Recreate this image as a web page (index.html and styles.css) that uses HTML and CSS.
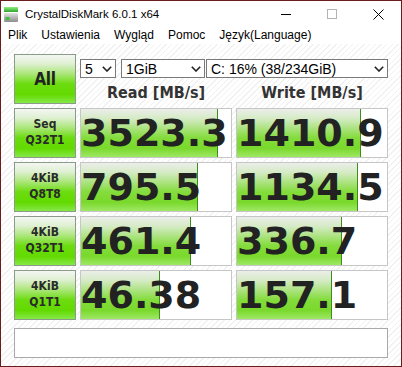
FILE: index.html
```html
<!DOCTYPE html>
<html>
<head>
<meta charset="utf-8">
<link rel="stylesheet" href="styles.css">
</head>
<body>
<div class="window">
  <div class="titlebar">
    <svg class="app-icon" width="14" height="15" viewBox="0 0 14 15">
      <defs>
        <linearGradient id="ig" x1="0" y1="0" x2="0" y2="1">
          <stop offset="0" stop-color="#8ef07a"/>
          <stop offset="1" stop-color="#2ea52e"/>
        </linearGradient>
        <linearGradient id="ib" x1="0" y1="0" x2="0" y2="1">
          <stop offset="0" stop-color="#e2e2e2"/>
          <stop offset="1" stop-color="#8c8c8c"/>
        </linearGradient>
      </defs>
      <rect x="0" y="0" width="14" height="5" fill="url(#ig)"/>
      <rect x="0" y="6" width="14" height="9" rx="1" fill="url(#ib)"/>
      <rect x="1.5" y="10" width="4" height="3" fill="#3ac43a"/>
    </svg>
    <span class="title">CrystalDiskMark 6.0.1 x64</span>
    <div class="caption">
      <span class="cap-btn"><svg width="10" height="10" viewBox="0 0 10 10"><line x1="0" y1="5.5" x2="10" y2="5.5" stroke="#000" stroke-width="1"/></svg></span>
      <span class="cap-btn"><svg width="10" height="10" viewBox="0 0 10 10"><rect x="0.5" y="0.5" width="9" height="9" fill="none" stroke="#b4b4b4" stroke-width="1"/></svg></span>
      <span class="cap-btn"><svg width="11" height="11" viewBox="0 0 11 11"><path d="M0.5 0.5 L10.5 10.5 M10.5 0.5 L0.5 10.5" stroke="#000" stroke-width="1" fill="none"/></svg></span>
    </div>
  </div>
  <div class="menubar">
    <span class="menu-item">Plik</span>
    <span class="menu-item">Ustawienia</span>
    <span class="menu-item">Wygląd</span>
    <span class="menu-item">Pomoc</span>
    <span class="menu-item">Język(Language)</span>
  </div>
  <div class="client">
    <div class="grid">
      <div class="btn btn-all">All</div>
      <div class="top-right">
        <div class="selects">
          <div class="select s-count"><span>5</span><span class="arrow"><svg width="10" height="6" viewBox="0 0 10 6"><polyline points="0.8,0.8 5,5 9.2,0.8" fill="none" stroke="#222" stroke-width="1.6"/></svg></span></div>
          <div class="select s-size"><span>1GiB</span><span class="arrow"><svg width="10" height="6" viewBox="0 0 10 6"><polyline points="0.8,0.8 5,5 9.2,0.8" fill="none" stroke="#222" stroke-width="1.6"/></svg></span></div>
          <div class="select s-drive"><span>C: 16% (38/234GiB)</span><span class="arrow"><svg width="10" height="6" viewBox="0 0 10 6"><polyline points="0.8,0.8 5,5 9.2,0.8" fill="none" stroke="#222" stroke-width="1.6"/></svg></span></div>
        </div>
        <div class="headers">
          <div>Read [MB/s]</div>
          <div>Write [MB/s]</div>
        </div>
      </div>

      <div class="btn"><span>Seq</span><span>Q32T1</span></div>
      <div class="cell"><div class="bar" style="width:91.3%"></div><span class="val">3523.3</span></div>
      <div class="cell"><div class="bar" style="width:82.7%"></div><span class="val">1410.9</span></div>

      <div class="btn"><span>4KiB</span><span>Q8T8</span></div>
      <div class="cell"><div class="bar" style="width:78%"></div><span class="val">795.5</span></div>
      <div class="cell"><div class="bar" style="width:80.7%"></div><span class="val">1134.5</span></div>

      <div class="btn"><span>4KiB</span><span>Q32T1</span></div>
      <div class="cell"><div class="bar" style="width:73.3%"></div><span class="val">461.4</span></div>
      <div class="cell"><div class="bar" style="width:70%"></div><span class="val">336.7</span></div>

      <div class="btn"><span>4KiB</span><span>Q1T1</span></div>
      <div class="cell"><div class="bar" style="width:52.7%"></div><span class="val">46.38</span></div>
      <div class="cell"><div class="bar" style="width:63.3%"></div><span class="val">157.1</span></div>
    </div>
    <div class="comment"></div>
  </div>
</div>
</body>
</html>
```
FILE: styles.css
```css
html, body {
  margin: 0;
  padding: 0;
  background: #fff;
}

.window {
  width: 402px;
  height: 367px;
  box-sizing: border-box;
  border: 1px solid #6b1d1d;
  display: flex;
  flex-direction: column;
  overflow: hidden;
  background: repeating-linear-gradient(135deg, #ffffff 0px, #ffffff 3px, #f1f1f1 3px, #f1f1f1 4px);
}

.titlebar {
  height: 26px;
  flex: none;
  background: #fff;
  display: flex;
  align-items: center;
  font-family: "Liberation Sans", Arial, sans-serif;
  font-size: 11.5px;
  color: #000;
}

.app-icon {
  margin-left: 3px;
  flex: none;
}

.title {
  margin-left: 7px;
}

.caption {
  margin-left: auto;
  display: flex;
  height: 100%;
}

.cap-btn {
  width: 46px;
  display: flex;
  align-items: center;
  justify-content: center;
}

.menubar {
  height: 17px;
  flex: none;
  background: #fff;
  display: flex;
  font-family: "Liberation Sans", Arial, sans-serif;
  font-size: 12px;
  line-height: 17px;
  color: #000;
}

.menu-item {
  padding: 0 7px;
}

.client {
  flex: 1;
  padding: 10px 13px 0 13px;
}

.grid {
  display: grid;
  grid-template-columns: 62px 152px 152px;
  grid-auto-rows: 50px;
  gap: 4px;
}

.btn {
  box-sizing: border-box;
  border: 1px solid #8b9b89;
  background: linear-gradient(to bottom, #f4f6f3 0%, #dff0d2 18%, #a9e676 40%, #6cdc10 60%, #62da00 82%, #86e848 100%);
  display: flex;
  flex-direction: column;
  align-items: center;
  justify-content: center;
  padding-bottom: 2px;
  font-family: "DejaVu Sans Condensed", "DejaVu Sans", sans-serif;
  font-stretch: condensed;
  font-weight: bold;
  font-size: 12px;
  line-height: 16px;
  color: #2a2a2a;
}

.btn-all {
  font-size: 17px;
  letter-spacing: -0.3px;
  padding-bottom: 0;
  color: #222;
}

.top-right {
  grid-column: 2 / 4;
  display: flex;
  flex-direction: column;
}

.selects {
  display: flex;
  margin-top: 5px;
  height: 19px;
}

.select {
  box-sizing: border-box;
  height: 19px;
  border: 1px solid #7a7a7a;
  background: #fff;
  display: flex;
  align-items: center;
  padding-left: 4px;
  font-family: "Liberation Sans", Arial, sans-serif;
  font-size: 14px;
  color: #000;
}

.select .arrow {
  margin-left: auto;
  width: 17px;
  display: flex;
  align-items: center;
  justify-content: center;
}

.s-count { width: 36px; }
.s-size { width: 84px; margin-left: 5px; }
.s-drive { width: 182px; margin-left: 1px; }

.headers {
  display: grid;
  grid-template-columns: 152px 152px;
  gap: 4px;
  margin-top: 6px;
  font-family: "DejaVu Sans Condensed", "DejaVu Sans", sans-serif;
  font-stretch: condensed;
  font-weight: bold;
  font-size: 16px;
  line-height: 18px;
  text-align: center;
  color: #333;
}

.cell {
  position: relative;
  box-sizing: border-box;
  border: 1px solid #c6c6c6;
  background: #fff;
}

.bar {
  position: absolute;
  left: 0;
  top: 0;
  bottom: 0;
  box-sizing: border-box;
  border-right: 1px solid #3d8c1c;
  background: linear-gradient(to bottom, #eceeea 0%, #d4ebc4 20%, #a8e27a 42%, #84dc3c 60%, #7ad92c 82%, #9ee866 100%);
}

.val {
  position: relative;
  display: block;
  white-space: nowrap;
  font-family: "DejaVu Sans", sans-serif;
  font-weight: bold;
  font-size: 38px;
  line-height: 48px;
  color: #222;
}

.comment {
  margin-top: 8px;
  height: 30px;
  box-sizing: border-box;
  border: 1px solid #a9a9a9;
  background: #fff;
}
```
